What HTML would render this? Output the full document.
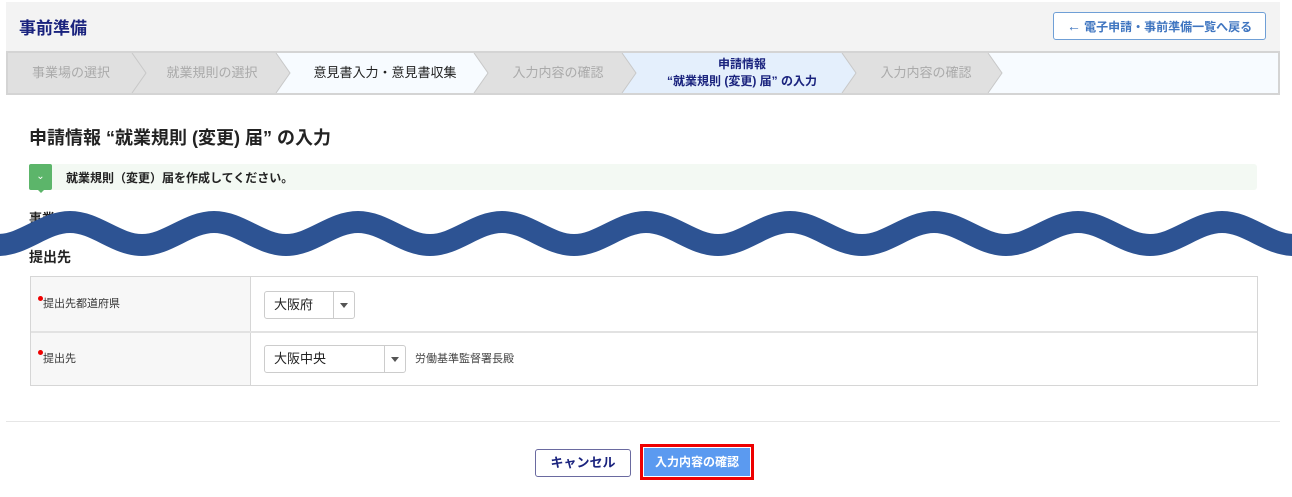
<!DOCTYPE html>
<html><head><meta charset="utf-8"><style>
*{box-sizing:border-box;margin:0;padding:0}
body{width:1292px;height:497px;background:#fff;font-family:"Liberation Sans","Noto Sans CJK JP",sans-serif;position:relative;overflow:hidden;color:#222}
.a{position:absolute}
.hdr{left:6px;top:2px;width:1274px;height:49px;background:#f3f3f3}
.step{top:51px;height:44px;left:6px;width:1274px;border:2px solid #d4d4d4;background:#f7fbff}
.sl{position:absolute;top:0;font-size:13px;line-height:40px;color:#aaa;text-align:center}
.tbl{left:30px;top:276px;width:1228px;height:110px;border:1px solid #d6d6d6}
.lab{position:absolute;left:0;width:220px;background:#f7f7f7;border-right:1px solid #d6d6d6;font-size:11px;color:#333;padding-left:12px}
.sel{position:absolute;border:1px solid #ccc;border-radius:3px;background:#fff;font-size:13px;line-height:26px;padding-left:9px;height:28px}
.sel i{position:absolute;right:0;top:0;width:21px;height:26px;border-left:1px solid #ccc}
.sel i:after{content:"";position:absolute;left:6px;top:11px;border:4px solid transparent;border-top:5px solid #555}
.dot{position:absolute;width:5px;height:5px;border-radius:50%;background:#e00}
</style></head><body>
<div class="a hdr"></div>
<div class="a" style="left:19px;top:14px;font-size:17px;font-weight:bold;color:#1a237e">事前準備</div>
<div class="a" style="left:1053px;top:12px;width:213px;height:28px;border:1px solid #6f9fd6;border-radius:3px;background:#fff;color:#3f75c0;font-size:12px;font-weight:bold;line-height:26px;text-align:center"><span style="font-size:14px">←</span> 電子申請・事前準備一覧へ戻る</div>
<div class="a step">
<svg width="1270" height="40" style="position:absolute;left:0;top:0">
<polygon points="0,0 124,0 138,20 124,40 0,40" fill="#e0e0e0"/>
<polygon points="124,0 268,0 282,20 268,40 124,40 138,20" fill="#e0e0e0"/>
<polygon points="268,0 466,0 480,20 466,40 268,40 282,20" fill="#f7fbff"/>
<polygon points="466,0 614,0 628,20 614,40 466,40 480,20" fill="#e0e0e0"/>
<polygon points="614,0 834,0 848,20 834,40 614,40 628,20" fill="#e4effc"/>
<polygon points="834,0 980,0 994,20 980,40 834,40 848,20" fill="#e0e0e0"/>
<g fill="none" stroke="#c8c8c8" stroke-width="1"><polyline points="124,0 138,20 124,40"/><polyline points="268,0 282,20 268,40"/><polyline points="466,0 480,20 466,40"/><polyline points="614,0 628,20 614,40"/><polyline points="834,0 848,20 834,40"/><polyline points="980,0 994,20 980,40"/></g>
</svg>
<div class="sl" style="left:0;width:126px">事業場の選択</div>
<div class="sl" style="left:134px;width:140px">就業規則の選択</div>
<div class="sl" style="left:282px;width:190px;color:#222">意見書入力・意見書収集</div>
<div class="sl" style="left:480px;width:140px">入力内容の確認</div>
<div class="sl" style="left:628px;width:212px;color:#1a237e;font-weight:bold;font-size:12px;line-height:17px;top:3px">申請情報<br>“就業規則 (変更) 届” の入力</div>
<div class="sl" style="left:848px;width:140px">入力内容の確認</div>
</div>
<div class="a" style="left:29px;top:124px;font-size:18px;font-weight:bold">申請情報 “就業規則 (変更) 届” の入力</div>
<div class="a" style="left:29px;top:164px;width:1228px;height:26px;background:#f3f9f3;border-radius:3px"></div>
<div class="a" style="left:29px;top:164px;width:23px;height:26px;background:#5cb56a;border-radius:2px;color:#fff;font-size:10px;text-align:center;line-height:26px">⌄</div>
<div class="a" style="left:37px;top:189px;border:4px solid transparent;border-top:4px solid #5cb56a"></div>
<div class="a" style="left:66px;top:169px;font-size:12px;font-weight:bold">就業規則（変更）届を作成してください。</div>
<div class="a" style="left:29px;top:208px;font-size:13px;font-weight:bold">事業</div>
<svg class="a" style="left:0;top:0" width="1292" height="497"><path d="M-74,222 C-48,222 -28,245 -2,245 S44,222 70,222 S116,245 142,245 S188,222 214,222 S260,245 286,245 S332,222 358,222 S404,245 430,245 S476,222 502,222 S548,245 574,245 S620,222 646,222 S692,245 718,245 S764,222 790,222 S836,245 862,245 S908,222 934,222 S980,245 1006,245 S1052,222 1078,222 S1124,245 1150,245 S1196,222 1222,222 S1268,245 1294,245 S1340,222 1366,222" fill="none" stroke="#2d5393" stroke-width="22"/></svg>
<div class="a" style="left:29px;top:247px;font-size:14px;font-weight:bold">提出先</div>
<div class="a tbl">
<div class="lab" style="top:0;height:54px;line-height:54px">提出先都道府県</div>
<div class="dot" style="left:7px;top:19px"></div>
<div style="position:absolute;left:0;top:54px;width:100%;border-top:2px solid #e2e2e2"></div>
<div class="lab" style="top:56px;height:52px;line-height:52px">提出先</div>
<div class="dot" style="left:7px;top:73px"></div>
<div class="sel" style="left:233px;top:14px;width:91px">大阪府<i></i></div>
<div class="sel" style="left:233px;top:68px;width:142px">大阪中央<i></i></div>
<div style="position:absolute;left:384px;top:68px;line-height:28px;font-size:11px;color:#444">労働基準監督署長殿</div>
</div>
<div class="a" style="left:6px;top:421px;width:1274px;border-top:1px solid #e6e6e6"></div>
<div class="a" style="left:535px;top:449px;width:96px;height:28px;border:1px solid #6a6aa0;border-radius:3px;font-size:13px;font-weight:bold;color:#1a237e;text-align:center;line-height:26px">キャンセル</div>
<div class="a" style="left:640px;top:444px;width:114px;height:36px;border:3px solid #e00;background:#fff;padding:1px"><div style="background:#5b9af0;height:100%;color:#fff;font-size:12px;font-weight:bold;text-align:center;line-height:28px">入力内容の確認</div></div>
</body></html>
